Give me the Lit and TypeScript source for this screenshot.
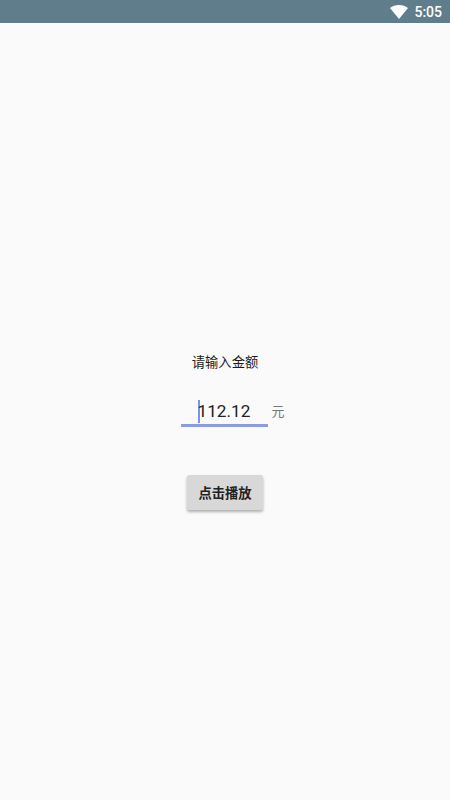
import { LitElement, html, css } from "lit";
import { customElement } from "lit/decorators.js";

@customElement("app-root")
export class AppRoot extends LitElement {
  static styles = css`
    :host {
      display: flex;
      flex-direction: column;
      height: 800px;
      background: #fafafa;
      font-family: Roboto, "Noto Sans CJK SC", sans-serif;
      color: #222;
    }
    .status {
      height: 23px;
      background: #607d8b;
      display: flex;
      align-items: center;
      justify-content: flex-end;
      gap: 6px;
      padding-right: 8px;
      color: #fff;
      font-size: 14px;
      font-weight: 500;
    }
    .wifi { width: 18px; height: 14px; display: block; }
    .main {
      flex: 1;
      display: flex;
      flex-direction: column;
      align-items: center;
      padding-top: 330px;
    }
    .label { font-size: 13.3px; line-height: 20px; width: 66px; white-space: nowrap; display: flex; justify-content: center; color: #1a1a1a; }
    .row {
      display: flex;
      align-items: flex-end;
      margin-top: 22px;
      gap: 3px;
      margin-left: 16px;
    }
    .input {
      width: 87px;
      height: 32px;
      box-sizing: border-box;
      border-bottom: 3px solid #8b9de2;
      display: flex;
      align-items: center;
      font-size: 17.2px;
      color: #222;
      padding-top: 3px;
      padding-left: 17px;
    }
    .caret { width: 2px; height: 23px; background: #7f93df; flex: none; }
    .value { margin-left: -3px; }
    .unit { font-size: 13px; color: #777; line-height: 18px; padding-bottom: 6px; }
    .btn {
      margin-top: 48px;
      width: 76px;
      height: 35px;
      border: none;
      border-radius: 2px;
      background: #d8d8d8;
      box-shadow: 0 2px 3px rgba(0, 0, 0, 0.3);
      font: 700 13.3px Roboto, "Noto Sans CJK SC", sans-serif;
      color: #222;
      padding: 0;
    }
  `;

  render() {
    return html`
      <div class="status">
        <svg class="wifi" viewBox="0 0 18 14"><path d="M0 3C2.400 1.100 5.500 0 9 0s6.600 1.100 9 3L9 14z" fill="#fff"/></svg>
        <span>5:05</span>
      </div>
      <div class="main">
        <div class="label">请输入金额</div>
        <div class="row">
          <div class="input"><span class="caret"></span><span class="value">112.12</span></div>
          <span class="unit">元</span>
        </div>
        <button class="btn">点击播放</button>
      </div>
    `;
  }
}
